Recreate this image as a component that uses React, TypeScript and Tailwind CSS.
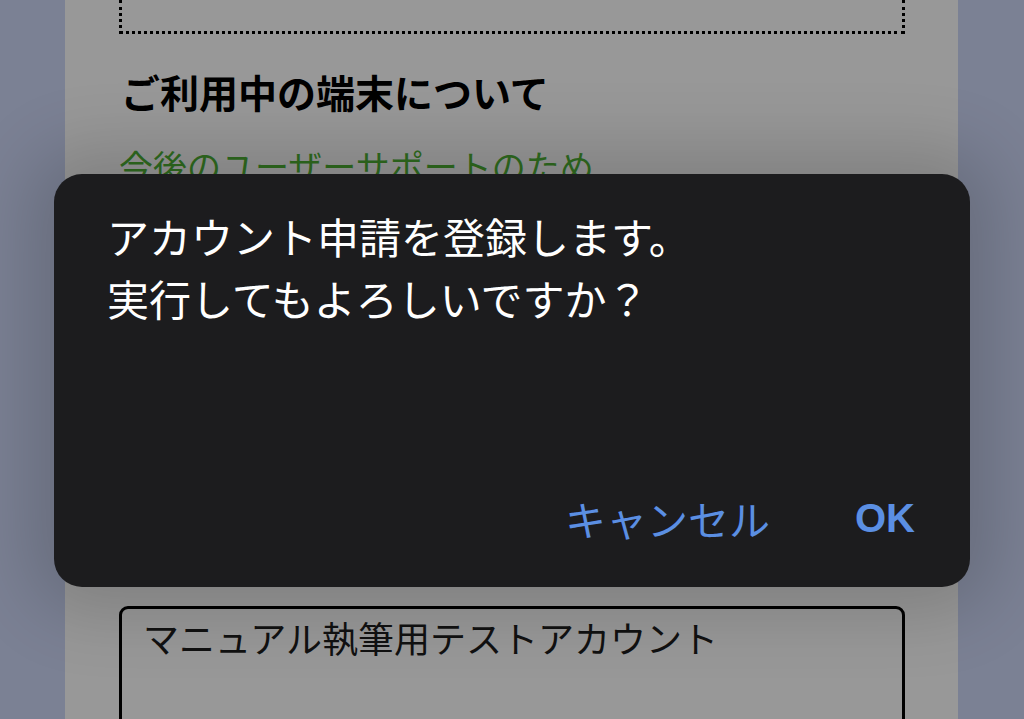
export default function App() {
  const jp = { fontFamily: '"Noto Sans CJK JP", "Noto Sans", sans-serif' };
  return (
    <div className="relative w-[1024px] h-[719px] overflow-hidden bg-[#7b8194]" style={jp}>
      <div className="ml-[65px] w-[893px] h-full bg-[#989898] pl-[54px] pr-[53px]">
        <div className="h-[34px] border-[3px] border-t-0 border-dotted border-black" />
        <h2 className="mt-[37px] ml-[2px] text-[39px] leading-[40px] font-bold text-black">
          ご利用中の端末について
        </h2>
        <p className="mt-[35px] text-[34px] leading-[40px] text-[#2f6b1f]">
          今後のユーザーサポートのため
        </p>
        <div className="mt-[420px] h-[200px] rounded-[9px] border-[3px] border-black bg-[#989898] pl-[21px] pt-[4px]">
          <div className="text-[36px] leading-[48px] text-[#111]">マニュアル執筆用テストアカウント</div>
        </div>
      </div>
      <div className="absolute left-[54px] top-[174px] w-[916px] h-[413px] rounded-[28px] bg-[#1c1c1e] shadow-[0_0_70px_25px_rgba(0,0,0,0.16)] flex flex-col">
        <div className="pl-[53px] pt-[31px] text-[42px] leading-[62px] text-white">
          <div>アカウント申請を登録します。</div>
          <div>実行してもよろしいですか？</div>
        </div>
        <div className="mt-auto mb-[44px] flex justify-end items-center gap-[85px] pr-[55px]">
          <span className="text-[41px] leading-[50px] text-[#5b8fe3]">キャンセル</span>
          <span className="text-[40px] leading-[50px] font-bold text-[#5b8fe3]" style={{ fontFamily: '"Liberation Sans", Arial, sans-serif' }}>OK</span>
        </div>
      </div>
    </div>
  );
}
